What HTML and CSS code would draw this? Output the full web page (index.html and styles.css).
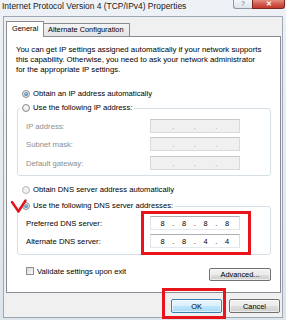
FILE: index.html
```html
<!DOCTYPE html>
<html>
<head>
<meta charset="utf-8">
<title>IPv4 Properties</title>
<link rel="stylesheet" href="styles.css">
</head>
<body>
<div class="window">
  <div class="titlebar">
    <span class="title">Internet Protocol Version 4 (TCP/IPv4) Properties</span>
    <div class="caption-btns">
      <div class="cbtn help">?</div>
      <div class="cbtn close">✕</div>
    </div>
  </div>
  <div class="client">
    <div class="tabs">
      <div class="tab active">General</div>
      <div class="tab">Alternate Configuration</div>
    </div>
    <div class="panel">
      <p class="intro">You can get IP settings assigned automatically if your network supports<br>this capability. Otherwise, you need to ask your network administrator<br>for the appropriate IP settings.</p>

      <div class="radio-row first"><span class="radio checked"></span>Obtain an IP address automatically</div>

      <fieldset class="group ipgroup">
        <legend><span class="radio"></span>Use the following IP address:</legend>
        <div class="field disabled"><span class="lbl">IP address:</span><div class="ip"><span class="seg"></span><span class="dot">.</span><span class="seg"></span><span class="dot">.</span><span class="seg"></span><span class="dot">.</span><span class="seg"></span></div></div>
        <div class="field disabled"><span class="lbl">Subnet mask:</span><div class="ip"><span class="seg"></span><span class="dot">.</span><span class="seg"></span><span class="dot">.</span><span class="seg"></span><span class="dot">.</span><span class="seg"></span></div></div>
        <div class="field disabled last"><span class="lbl">Default gateway:</span><div class="ip"><span class="seg"></span><span class="dot">.</span><span class="seg"></span><span class="dot">.</span><span class="seg"></span><span class="dot">.</span><span class="seg"></span></div></div>
      </fieldset>

      <div class="radio-row dns-auto"><span class="radio disabled-radio"></span>Obtain DNS server address automatically</div>

      <fieldset class="group dnsgroup">
        <legend><span class="radio checked"></span>Use the following DNS server addresses:</legend>
        <div class="field"><span class="lbl">Preferred DNS server:</span><div class="ip"><span class="seg">8</span><span class="dot">.</span><span class="seg">8</span><span class="dot">.</span><span class="seg">8</span><span class="dot">.</span><span class="seg">8</span></div></div>
        <div class="field"><span class="lbl">Alternate DNS server:</span><div class="ip"><span class="seg">8</span><span class="dot">.</span><span class="seg">8</span><span class="dot">.</span><span class="seg">4</span><span class="dot">.</span><span class="seg">4</span></div></div>
      </fieldset>

      <div class="bottom-row">
        <div class="check-row"><span class="checkbox"></span>Validate settings upon exit</div>
        <div class="btn advanced">Advanced...</div>
      </div>
    </div>
    <div class="buttons">
      <div class="btn ok">OK</div>
      <div class="btn cancel">Cancel</div>
    </div>
  </div>
</div>

<svg class="tick" width="20" height="16" viewBox="0 0 20 16">
  <path d="M2 4 L8.5 13.5 L15.5 2.5" fill="none" stroke="#e0121a" stroke-width="2.4" stroke-linecap="round" stroke-linejoin="round"/>
</svg>
<div class="mark mark-dns"></div>
<div class="mark mark-ok"></div>
</body>
</html>
```

FILE: styles.css
```css
* { box-sizing: border-box; }
html, body { margin: 0; padding: 0; }
body {
  width: 286px;
  height: 320px;
  overflow: hidden;
  position: relative;
  font-family: "Liberation Sans", Arial, sans-serif;
  font-size: 7.7px;
  color: #000;
  background: #dfe6ee;
}
.window {
  width: 286px;
  height: 320px;
  display: flex;
  flex-direction: column;
  background: linear-gradient(#eef2f6, #dce4ec);
}
.titlebar {
  height: 16px;
  flex: none;
  display: flex;
  justify-content: space-between;
  align-items: flex-start;
  padding: 0 1px 0 2px;
}
.title {
  font-size: 8.45px;
  line-height: 13px;
  color: #1a1a1a;
}
.caption-btns {
  display: flex;
}
.cbtn {
  height: 9px;
  display: flex;
  align-items: flex-end;
  justify-content: center;
  padding-bottom: 1px;
  font-size: 7px;
  line-height: 7px;
}
.help {
  width: 19px;
  border: 1px solid #8d98a5;
  border-top: none;
  border-right: none;
  border-radius: 0 0 0 3px;
  background: linear-gradient(#f3f5f8, #dfe5ec);
  color: #6d7886;
}
.close {
  width: 33px;
  border: 1px solid #7a2a22;
  border-top: none;
  border-radius: 0 0 3px 0;
  background: linear-gradient(#e48f82, #d0564a 55%, #c4392d);
  color: #fff;
  font-weight: bold;
  font-size: 7px;
}
.client {
  flex: 1;
  margin: 0 3px 2px 3px;
  border: 1px solid #9ba7b5;
  background: #f0f0f0;
  display: flex;
  flex-direction: column;
  padding: 4px 1px 0 2px;
}
.tabs {
  display: flex;
  height: 15px;
  align-items: flex-end;
  position: relative;
  z-index: 1;
}
.tab {
  height: 13px;
  width: 86px;
  border: 1px solid #898c95;
  border-bottom: none;
  border-left: none;
  background: linear-gradient(#f4f4f4, #e4e4e4);
  font-size: 7.4px;
  line-height: 12px;
  padding-left: 4px;
  color: #000;
}
.tab.active {
  width: 38px;
  height: 16px;
  margin-bottom: -1px;
  border-left: 1px solid #898c95;
  background: #fff;
  padding-left: 5px;
  line-height: 13px;
}
.panel {
  height: 257px;
  border: 1px solid #898c95;
  background: #fff;
  padding: 0 9px;
  display: flex;
  flex-direction: column;
}
.intro {
  margin: 8px 0 0 0;
  line-height: 10px;
  font-size: 7.8px;
  white-space: nowrap;
}
.radio-row {
  height: 12px;
  display: flex;
  align-items: center;
  padding-left: 6px;
  line-height: 12px;
}
.radio-row.first { margin-top: 13px; }
.radio-row.dns-auto { margin-top: 8px; }
.radio {
  width: 8px;
  height: 8px;
  flex: none;
  border-radius: 50%;
  border: 1px solid #8a8d92;
  background: radial-gradient(circle at 50% 40%, #fdfdfd, #dcdcdc);
  margin-right: 3px;
  display: inline-block;
  vertical-align: middle;
  position: relative;
}
.radio.checked::after {
  content: "";
  position: absolute;
  left: 1px;
  top: 1px;
  width: 4px;
  height: 4px;
  border-radius: 50%;
  background: radial-gradient(circle at 40% 35%, #9fc2e4, #2a5f95);
}
.radio.disabled-radio {
  border-color: #b5b5b5;
  background: #f2f2f2;
}
.group {
  margin: 2px 0 0 1px;
  border: 1px solid #d5dfe5;
  border-radius: 3px;
  padding: 5px 0 5px 2px;
  min-width: 0;
}
.dnsgroup {
  margin-top: 4px;
  padding-top: 4px;
  padding-bottom: 6px;
}
.group legend {
  padding: 0 2px;
  line-height: 12px;
  height: 12px;
  display: flex;
  align-items: center;
}
.field {
  display: flex;
  align-items: center;
  height: 14px;
  padding-left: 6px;
}
.field + .field { margin-top: 4px; }
.field.last { margin-top: 5px; }
.lbl {
  width: 124px;
  flex: none;
}
.field.disabled .lbl { color: #8d8d8d; }
.ip {
  width: 90px;
  height: 14px;
  border: 1px solid #abadb3;
  border-color: #abadb3 #dbdfe6 #e3e9ef #e2e3ea;
  background: #fff;
  display: flex;
  align-items: center;
  padding-left: 4px;
  font-size: 7.4px;
}
.field.disabled .ip {
  background: #f0f0f0;
  border-color: #c8c8c8 #dadada #dadada #dadada;
  color: #9a9a9a;
}
.seg {
  width: 15px;
  text-align: center;
}
.dot {
  width: 6.5px;
  text-align: center;
}
.bottom-row {
  display: flex;
  justify-content: space-between;
  align-items: flex-start;
  margin-top: 10px;
}
.check-row {
  display: flex;
  align-items: center;
  height: 12px;
  padding-left: 10px;
}
.checkbox {
  width: 8px;
  height: 8px;
  border: 1px solid #8e8f8f;
  background: linear-gradient(135deg, #d8d8d8, #fafafa);
  margin-right: 3px;
}
.btn {
  height: 13px;
  border: 1px solid #707070;
  border-radius: 2px;
  background: linear-gradient(#f2f2f2 0%, #ebebeb 50%, #dddddd 51%, #cfcfcf 100%);
  display: flex;
  align-items: center;
  justify-content: center;
  font-size: 7.4px;
  box-shadow: inset 0 0 0 1px rgba(255,255,255,0.6);
}
.advanced {
  width: 62px;
  margin-top: 3px;
}
.buttons {
  display: flex;
  justify-content: flex-end;
  gap: 7px;
  margin-top: 6px;
  padding-right: 1px;
}
.buttons .btn {
  width: 51px;
  height: 14px;
}
.btn.ok {
  border-color: #3c7fb1;
  background: linear-gradient(#eaf6fd 0%, #d9f0fc 50%, #bee6fd 51%, #a7d9f5 100%);
}
.tick {
  position: absolute;
  left: 10px;
  top: 198px;
}
.mark {
  position: absolute;
  border: 3px solid #e8141b;
}
.mark-dns {
  left: 141px;
  top: 211px;
  width: 110px;
  height: 44px;
}
.mark-ok {
  left: 162px;
  top: 288px;
  width: 64px;
  height: 31px;
}
```
